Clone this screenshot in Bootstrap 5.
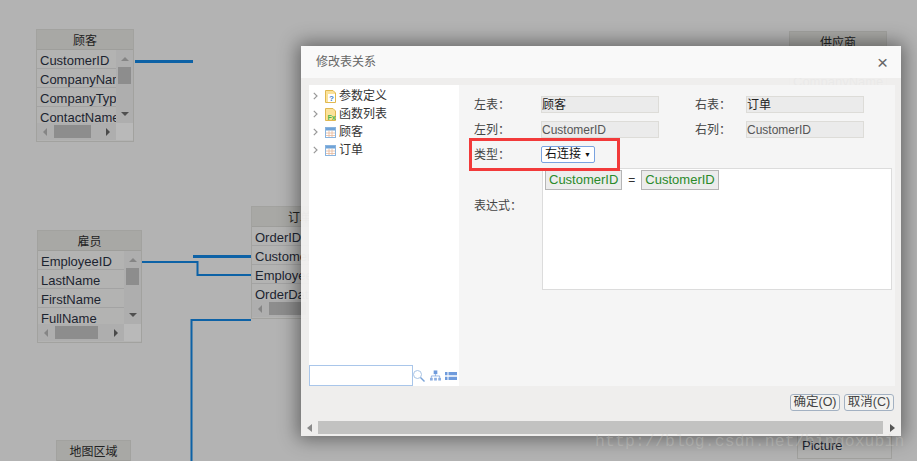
<!DOCTYPE html>
<html lang="zh">
<head>
<meta charset="utf-8">
<title>修改表关系</title>
<link href="https://cdn.jsdelivr.net/npm/bootstrap@5.3.0/dist/css/bootstrap.min.css" rel="stylesheet">
<style>
html,body{height:100%;}
body{background:#b3b3b3;overflow:hidden;font:12px/1.2 "Liberation Sans","Noto Sans CJK SC",sans-serif;color:#222;}
.stage{position:relative;width:917px;height:461px;overflow:hidden;}
.wires{position:absolute;left:0;top:0;}
.tnode{position:absolute;border:1px solid #a2a29f;background:#b3b3b2;overflow:hidden;}
.n1{left:36px;top:29px;width:98px;height:113px;}
.n2{left:37px;top:230px;width:105px;height:113px;}
.n3{left:251px;top:206px;width:98px;height:113px;}
.n4{left:789px;top:31px;width:98px;height:113px;}
.n5{left:56px;top:440px;width:75px;height:40px;}
.n6{left:797px;top:432px;width:95px;height:27px;}
.n6 .frow{height:23px;line-height:25px;padding-left:4px;border-bottom:0;}
.thead{height:20px;line-height:22px;text-align:center;background:#a8a8a5;border-bottom:1px solid #9e9e9b;color:#222;overflow:hidden;}
.frow{height:19px;line-height:21px;padding-left:3px;border-bottom:1px solid #a3a3a3;font-size:13px;white-space:nowrap;overflow:hidden;color:#1c2430;}
.fcol{flex:1 1 0;min-width:0;}
.flist{height:73px;overflow:hidden;}
.vbar{width:17px;background:#b9b9b9;}
.vtrack{height:73px;padding:7px 2px 0 2px;background:#aeaeae;}
.vthumb{height:17px;width:13px;background:#8d8d8d;margin-top:6px;}
.hbar{height:17px;background:#aeaeae;padding:1px 2px;}
.hthumb{height:13px;background:#8d8d8d;width:37px;margin:1px 0 0 7px;}
.n2 .hthumb{width:43px;}
.tri{width:0;height:0;border-style:solid;flex:none;}
.tu{border-width:0 4px 4px;border-color:transparent transparent #858585;margin:0 auto;}
.td{border-width:4px 4px 0;border-color:#505050 transparent transparent;margin:28px auto 0;}
.tl{border-width:4px 4px 4px 0;border-color:transparent #858585 transparent transparent;margin:4px 0 0 4px;}
.tr{border-width:4px 0 4px 4px;border-color:transparent transparent transparent #4a4a4a;margin:4px 4px 0 auto;}
.dlg{position:absolute;left:301px;top:46px;width:600px;height:390px;background:rgba(241,240,238,.97);box-shadow:0 0 18px 3px rgba(0,0,0,.45);}
.dlg-head{height:32px;background:rgba(249,249,249,.97);padding:0 15px;color:#666;}
.dlg-x{font-size:19px;line-height:19px;color:#666;margin-top:1px;margin-right:-2px;}
.dlg-body{height:301px;margin:7px 6px 0 8px;}
.tree{width:150px;background:#fff;padding-top:2px;}
.tree-row{height:18px;padding-left:4px;color:#333;}
.chev{width:5px;margin-right:7px;flex:none;}
.ticon{width:11px;height:13px;margin-right:3px;flex:none;}
.sbox{width:104px;height:21px;border:1px solid #a9c6ea;background:#fff;padding:0;outline:0;display:block;flex:none;}
.tools svg{flex:none;}
.ic-org{margin-left:5px;}
.ic-list{margin-left:4px;}
.panel{flex:1 1 0;background:#f5f5f5;padding:11px 0 0 15px;color:#444;}
.frm{height:17px;margin-bottom:8px;}
.lab{width:67px;flex:none;padding-top:2px;}
.lab2{width:51px;flex:none;margin-left:36px;padding-top:2px;}
.ro{width:118px;height:17px;background:#ebebeb;border:1px solid #dddcd8;line-height:17px;flex:none;color:#555;}
.ro-cn{color:#222;}
.sel{width:54px;height:17px;border:1px solid #7aa3e0;border-radius:2px;background:#fff;line-height:15px;padding-left:3px;color:#111;}
.sel i{font-style:normal;font-size:7px;margin-left:3px;vertical-align:1px;}
.exprrow{margin-top:-3px;}
.lab3{width:68px;flex:none;padding-top:31px;}
.expr{width:350px;height:122px;background:#fff;border:1px solid #dcdcdc;padding:1px 2px;}
.tok{height:20px;line-height:18px;background:#ececec;border:1px solid #b5b5b5;color:#2a8a2a;padding:0 3px;font-size:13px;}
.eq{width:19px;text-align:center;line-height:20px;color:#333;}
.foot{height:35px;padding:8px 7px 0 0;gap:4px;}
.dbtn{width:50px;height:17px;line-height:15px;padding:0;font-size:12.5px;color:#444;background:#f2f2f0;border:1px solid #a3b1c2;border-radius:3px;}
.dbtn:hover{background:#f2f2f0;color:#444;border-color:#a3b1c2;}
.dscroll{height:13px;padding:0 6px;}
.dthumb{margin:0 7px 0 6px;background:#c2c2c1;height:13px;flex:1 1 0;}
.tl2{border-width:4px 5px 4px 0;border-color:transparent #8a8a8a transparent transparent;margin-top:3px;}
.tr2{border-width:4px 0 4px 5px;border-color:transparent transparent transparent #555;margin-top:3px;}
.redbox{position:absolute;left:469px;top:138px;width:151px;height:33px;border:3px solid #f23a3a;}
.wmark{position:absolute;left:595px;top:432px;font:16.4px/20px "Liberation Mono",monospace;letter-spacing:.15px;color:rgba(205,205,198,.32);white-space:nowrap;}
</style>
</head>
<body>
<div class="stage">
  <svg class="wires" width="917" height="461" aria-hidden="true">
    <g fill="none" stroke="#0d62a6">
      <path d="M135 61.500H193" stroke-width="3"/>
      <path d="M142 262H197.500V275H251" stroke-width="2"/>
      <path d="M193 256.500H251" stroke-width="3"/>
      <path d="M251 320H191.500V461" stroke-width="2"/>
    </g>
  </svg>

  <div class="tnode n1">
    <div class="thead">顾客</div>
    <div class="d-flex">
      <div class="fcol">
        <div class="flist">
          <div class="frow">CustomerID</div><div class="frow">CompanyName</div><div class="frow">CompanyType</div><div class="frow">ContactName</div>
        </div>
        <div class="hbar d-flex"><span class="tri tl"></span><div class="hthumb"></div><span class="tri tr"></span></div>
      </div>
      <div class="vbar">
        <div class="vtrack"><span class="tri tu d-block"></span><div class="vthumb"></div><span class="tri td d-block"></span></div>
      </div>
    </div>
  </div>

  <div class="tnode n2">
    <div class="thead">雇员</div>
    <div class="d-flex">
      <div class="fcol">
        <div class="flist">
          <div class="frow">EmployeeID</div><div class="frow">LastName</div><div class="frow">FirstName</div><div class="frow">FullName</div>
        </div>
        <div class="hbar d-flex"><span class="tri tl"></span><div class="hthumb"></div><span class="tri tr"></span></div>
      </div>
      <div class="vbar">
        <div class="vtrack"><span class="tri tu d-block"></span><div class="vthumb"></div><span class="tri td d-block"></span></div>
      </div>
    </div>
  </div>

  <div class="tnode n3">
    <div class="thead">订单</div>
    <div class="d-flex">
      <div class="fcol">
        <div class="flist">
          <div class="frow">OrderID</div><div class="frow">CustomerID</div><div class="frow">EmployeeID</div><div class="frow">OrderDate</div>
        </div>
        <div class="hbar d-flex"><span class="tri tl"></span><div class="hthumb"></div><span class="tri tr"></span></div>
      </div>
      <div class="vbar"></div>
    </div>
  </div>

  <div class="tnode n4">
    <div class="thead">供应商</div>
    <div class="frow">SupplierID</div><div class="frow">CompanyName</div><div class="frow">ContactName</div>
  </div>
  <div class="tnode n5"><div class="thead">地图区域</div></div>
  <div class="tnode n6"><div class="frow">Picture</div></div>

  <div class="dlg">
    <div class="dlg-head d-flex align-items-center justify-content-between">
      <span>修改表关系</span><span class="dlg-x">×</span>
    </div>
    <div class="dlg-body d-flex">
      <div class="tree d-flex flex-column">
        <div class="tree-row d-flex align-items-center">
          <svg class="chev" width="5" height="8" viewBox="0 0 5 8"><path d="M.8.8 4 4 .8 7.200" fill="none" stroke="#999" stroke-width="1.200"/></svg>
          <svg class="ticon" viewBox="0 0 11 13"><path d="M.5.5H8L10.500 3V12.500H.5Z" fill="#fbe29a" stroke="#e0b850"/><rect x="3" y="4" width="7" height="8" fill="#fff"/><text x="4" y="11" font-size="8" font-weight="700" fill="#3a80d0">?</text></svg>
          <span>参数定义</span>
        </div>
        <div class="tree-row d-flex align-items-center">
          <svg class="chev" width="5" height="8" viewBox="0 0 5 8"><path d="M.8.8 4 4 .8 7.200" fill="none" stroke="#999" stroke-width="1.200"/></svg>
          <svg class="ticon" viewBox="0 0 11 13"><path d="M.5.5H8L10.500 3V12.500H.5Z" fill="#fbe29a" stroke="#e0b850"/><text x="2.500" y="12" font-size="7" font-weight="700" fill="#4cb84c">Fx</text></svg>
          <span>函数列表</span>
        </div>
        <div class="tree-row d-flex align-items-center">
          <svg class="chev" width="5" height="8" viewBox="0 0 5 8"><path d="M.8.8 4 4 .8 7.200" fill="none" stroke="#999" stroke-width="1.200"/></svg>
          <svg class="ticon" viewBox="0 0 11 13"><rect x=".5" y="1.500" width="10" height="10" fill="#fff" stroke="#8ab4de"/><rect x="1" y="2" width="9" height="2.500" fill="#6fa3d8"/><path d="M1 7H10M1 9.500H10M4 4.500V11M7 4.500V11" stroke="#e6b89a" stroke-width=".8"/></svg>
          <span>顾客</span>
        </div>
        <div class="tree-row d-flex align-items-center">
          <svg class="chev" width="5" height="8" viewBox="0 0 5 8"><path d="M.8.8 4 4 .8 7.200" fill="none" stroke="#999" stroke-width="1.200"/></svg>
          <svg class="ticon" viewBox="0 0 11 13"><rect x=".5" y="1.500" width="10" height="10" fill="#fff" stroke="#8ab4de"/><rect x="1" y="2" width="9" height="2.500" fill="#6fa3d8"/><path d="M1 7H10M1 9.500H10M4 4.500V11M7 4.500V11" stroke="#e6b89a" stroke-width=".8"/></svg>
          <span>订单</span>
        </div>
        <div class="tools mt-auto d-flex align-items-center">
          <input class="sbox" type="text" aria-label="search">
          <svg width="12" height="12" viewBox="0 0 12 12"><circle cx="4.500" cy="4.500" r="4" fill="none" stroke="#a9c4e4"/><path d="M7.500 7.500 11.500 11.500" stroke="#7ba3d8" stroke-width="1.400"/></svg>
          <svg class="ic-org" width="11" height="11" viewBox="0 0 12 11"><rect x="4" y="0" width="4" height="4" fill="#6f9bdc"/><path d="M6 4V6M1.500 8V6H10.500V8" fill="none" stroke="#8fb0e2"/><rect x="0" y="8" width="3" height="3" fill="#8fb0e2"/><rect x="4.500" y="8" width="3" height="3" fill="#8fb0e2"/><rect x="9" y="8" width="3" height="3" fill="#8fb0e2"/></svg>
          <svg class="ic-list" width="12" height="8" viewBox="0 0 12 8"><path d="M0 0H2.500V3.300H0ZM0 4.700H2.500V8H0ZM3.500 0H12V3.300H3.500ZM3.500 4.700H12V8H3.500Z" fill="#6f9bdc"/></svg>
        </div>
      </div>
      <div class="panel">
        <div class="frm d-flex align-items-center">
          <span class="lab">左表：</span><div class="ro ro-cn">顾客</div>
          <span class="lab2">右表：</span><div class="ro ro-cn">订单</div>
        </div>
        <div class="frm d-flex align-items-center">
          <span class="lab">左列：</span><div class="ro">CustomerID</div>
          <span class="lab2">右列：</span><div class="ro">CustomerID</div>
        </div>
        <div class="frm d-flex align-items-center">
          <span class="lab">类型：</span><div class="sel">右连接<i>▼</i></div>
        </div>
        <div class="exprrow d-flex">
          <span class="lab3">表达式：</span>
          <div class="expr d-flex align-items-start">
            <span class="tok">CustomerID</span><span class="eq">=</span><span class="tok">CustomerID</span>
          </div>
        </div>
      </div>
    </div>
    <div class="foot d-flex justify-content-end">
      <button type="button" class="btn dbtn">确定(O)</button>
      <button type="button" class="btn dbtn">取消(C)</button>
    </div>
    <div class="dscroll d-flex">
      <span class="tri tl2"></span><div class="dthumb"></div><span class="tri tr2"></span>
    </div>
  </div>

  <div class="redbox"></div>
  <div class="wmark">http://blog.csdn.net/bingoxubin</div>
</div>
<script src="https://cdn.jsdelivr.net/npm/bootstrap@5.3.0/dist/js/bootstrap.bundle.min.js"></script>
</body>
</html>
